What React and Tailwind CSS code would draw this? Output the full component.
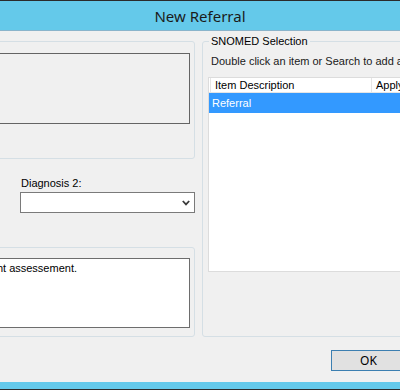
export default function App() {
  return (
    <div className="w-[400px] h-[390px] overflow-hidden bg-[#f0f0f0] flex flex-col font-['Liberation_Sans',Arial,sans-serif] text-[11px] leading-[13px] text-black">
      {/* Title bar */}
      <div className="h-[31px] shrink-0 bg-[#64c9ea] border-t border-t-[#2b2b2b] border-b border-b-[#8ab4cb] flex items-center justify-center">
        <span className="font-['Noto_Sans',sans-serif] text-[15px] leading-[18px] text-[#1b1b1b]">New Referral</span>
      </div>

      <div className="flex-1 flex flex-col">
        <div className="flex gap-[7px] pt-[10px]">
          {/* Left column, starts off-screen */}
          <div className="-ml-[206px] w-[401px] shrink-0 flex flex-col">
            <div className="h-[118px] border border-[#d5dfe5] rounded-[3px] pt-[11px] pr-[4px] flex justify-end">
              <div className="w-[300px] h-[71px] border border-[#646464]" />
            </div>

            <div className="flex justify-end">
              <div className="w-[175px] flex flex-col">
                <label className="mt-[18px] pl-[1px]">Diagnosis 2:</label>
                <div className="mt-[2px] h-[21px] bg-white border border-[#7a7a7a] flex items-center justify-end pr-[4px]">
                  <svg width="8" height="6" viewBox="0 0 8 6">
                    <path d="M0.8 1 L4 4.4 L7.2 1" fill="none" stroke="#3a3a3a" strokeWidth="1.8" />
                  </svg>
                </div>
              </div>
            </div>

            <div className="mt-[34px] h-[90px] border border-[#d5dfe5] rounded-[3px] pt-[10px] pr-[4px] flex justify-end">
              <div className="w-[300px] h-[70px] bg-white border border-[#6d6d6d] pt-[3px] flex justify-end pr-[112px]">
                <p className="whitespace-nowrap">Referral for an eyesight assessement.</p>
              </div>
            </div>
          </div>

          {/* SNOMED Selection group */}
          <div className="relative w-[260px] h-[296px] shrink-0 border border-[#d5dfe5] rounded-[3px] pt-[13px] pl-[5px]">
            <span className="absolute -top-[7px] left-[6px] px-[2px] bg-[#f0f0f0]">SNOMED Selection</span>
            <p className="pl-[3px] whitespace-nowrap text-[#1a1a1a]">Double click an item or Search to add a SNOMED code</p>
            <div className="mt-[9px] h-[195px] bg-white border border-[#dcdcdc]">
              <div className="h-[15px] flex pl-[1px] border-b border-[#e5e5e5]">
                <div className="w-[162px] border-l border-r border-[#e5e5e5] pl-[4px] flex items-center">Item Description</div>
                <div className="pl-[4px] flex items-center border-r border-[#e5e5e5] w-[60px]">Apply</div>
              </div>
              <div className="h-[20px] bg-[#3399ff] text-white flex items-center pl-[3px]">Referral</div>
            </div>
          </div>
        </div>

        {/* Footer */}
        <div className="flex justify-end -mr-[6px] mt-[13px]">
          <button className="w-[75px] h-[21px] bg-[#e1e1e1] border border-[#3c7fb1] text-[12px] leading-[14px] font-['Noto_Sans',sans-serif]">OK</button>
        </div>
      </div>

      {/* Bottom frame */}
      <div className="h-[8px] shrink-0 bg-[#64c9ea] border-b border-b-[#2b2b2b]" />
    </div>
  )
}
